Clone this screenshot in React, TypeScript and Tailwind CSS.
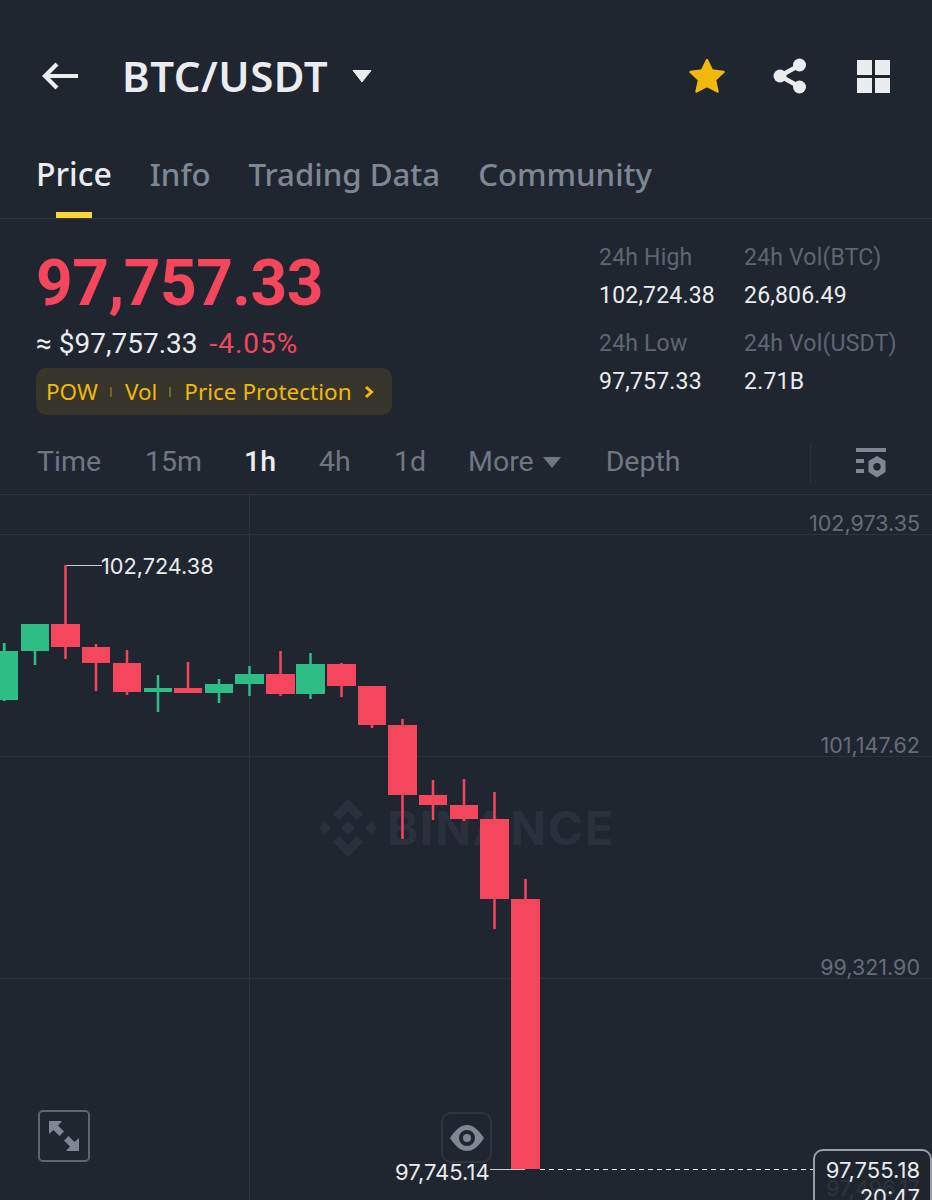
const UP = "#2ebd85";
const DOWN = "#f6465d";
const candles: [number, number, number, number, number, number, string][] = [
  [-10, 18, 651, 700, 643, 701, UP],
  [21, 49, 624, 651, 624, 665, UP],
  [51, 80, 624, 647, 565, 659, DOWN],
  [82, 110, 647, 663, 644, 691, DOWN],
  [113, 141, 663, 692, 650, 695, DOWN],
  [144, 172, 688, 692, 675, 712, UP],
  [174, 202, 688, 693, 662, 693, DOWN],
  [205, 233, 684, 693, 679, 703, UP],
  [235, 264, 674, 684, 666, 696, UP],
  [266, 295, 674, 694, 651, 696, DOWN],
  [296, 325, 664, 694, 653, 699, UP],
  [327, 356, 664, 686, 663, 697, DOWN],
  [358, 386, 686, 725, 686, 728, DOWN],
  [388, 417, 725, 795, 719, 839, DOWN],
  [419, 447, 795, 805, 780, 820, DOWN],
  [450, 478, 805, 819, 779, 821, DOWN],
  [480, 509, 819, 899, 792, 929, DOWN],
  [511, 540, 899, 1169, 879, 1169, DOWN],
];

function Stat({ label, value, className }: { label: string; value: string; className: string }) {
  return (
    <div className={className}>
      <div className="text-[23px] leading-[30px] tracking-[0.2px] text-[#5e6673]">{label}</div>
      <div className="mt-[8px] text-[23px] leading-[30px] tracking-[0.2px] text-[#eaecef]">{value}</div>
    </div>
  );
}

function BinanceMark({ className }: { className: string }) {
  return (
    <svg viewBox="0 0 58 58" className={className} fill="currentColor">
      <path d="M29 0 L44 15 L38 21 L29 12 L20 21 L14 15 Z" />
      <path d="M29 58 L44 43 L38 37 L29 46 L20 37 L14 43 Z" />
      <path d="M6 23 L12 29 L6 35 L0 29 Z" />
      <path d="M52 23 L58 29 L52 35 L46 29 Z" />
      <path d="M29 22 L36 29 L29 36 L22 29 Z" />
    </svg>
  );
}

export default function App() {
  return (
    <div className="flex h-[1200px] w-[932px] flex-col overflow-hidden bg-[#1f2630] font-['Noto_Sans',sans-serif]">
      {/* Header */}
      <div className="flex h-[152px] items-center">
        <svg viewBox="0 0 38 30" className="ml-[41px] h-[30px] w-[38px]" fill="none" stroke="#eaecef" strokeWidth="4.2">
          <path d="M37 15 H4" />
          <path d="M16 3 L4 15 L16 27" />
        </svg>
        <div className="ml-[43px] text-[42px] font-semibold leading-[48px] tracking-[0.5px] text-[#eaecef]">BTC/USDT</div>
        <svg viewBox="0 0 20 14" className="ml-[24px] h-[14px] w-[20px]" fill="#eaecef">
          <path d="M1 1.5 H19 L10 13 Z" stroke="#eaecef" strokeWidth="1" strokeLinejoin="round" />
        </svg>
        <svg viewBox="0 0 36 36" className="ml-[317px] h-[36px] w-[36px]" fill="#f0b90b">
          <path d="M18 2 L23 12.5 L34.5 14 L26 22 L28.5 33.5 L18 28 L7.5 33.5 L10 22 L1.5 14 L13 12.5 Z" stroke="#f0b90b" strokeWidth="2.4" strokeLinejoin="round" />
        </svg>
        <svg viewBox="0 0 34 36" className="ml-[48px] h-[36px] w-[34px]" fill="#eaecef" stroke="#eaecef">
          <path d="M27 7 L7 18 L27 29" fill="none" strokeWidth="4.5" />
          <circle cx="26.5" cy="7" r="6.5" stroke="none" />
          <circle cx="7" cy="18" r="6.5" stroke="none" />
          <circle cx="26.5" cy="29" r="6.5" stroke="none" />
        </svg>
        <div className="ml-[50px] grid h-[33px] w-[33px] grid-cols-2 gap-[3px]">
          <div className="bg-[#eaecef]" />
          <div className="bg-[#eaecef]" />
          <div className="bg-[#eaecef]" />
          <div className="bg-[#eaecef]" />
        </div>
      </div>

      {/* Tabs */}
      <div className="flex h-[67px] items-start border-b border-[#2f3641] pl-[36px] text-[31.2px] leading-[44px] text-[#7f8794]">
        <div className="relative h-[66px] text-[32px] font-medium text-[#eaecef]">
          Price
          <div className="absolute bottom-0 left-[20px] h-[6px] w-[36px] bg-[#fcd535]" />
        </div>
        <div className="ml-[38px] font-medium">Info</div>
        <div className="ml-[38px] font-medium">Trading Data</div>
        <div className="ml-[38px] font-medium">Community</div>
      </div>

      {/* Price and stats */}
      <div className="flex h-[215px] font-['Roboto',sans-serif]">
        <div className="ml-[36px] w-[563px]">
          <div className="mt-[25px] text-[64px] font-bold leading-[80px] tracking-[-0.5px] text-[#f6465d]">97,757.33</div>
          <div className="mt-[3px] flex items-center text-[28px] leading-[34px]">
            <span className="text-[#eaecef]">≈ $97,757.33</span>
            <span className="ml-[12px] tracking-[1px] text-[#f6465d]">-4.05%</span>
          </div>
          <div className="mt-[7px] flex h-[47px] w-[356px] items-center rounded-[10px] bg-[#38352a] pl-[10px] font-['Noto_Sans',sans-serif] text-[22.5px] text-[#f0b90b]">
            <span>POW</span>
            <span className="ml-[12px] h-[10px] w-[2px] bg-[#6e6433]" />
            <span className="ml-[13px]">Vol</span>
            <span className="ml-[12px] h-[10px] w-[2px] bg-[#6e6433]" />
            <span className="ml-[13px]">Price Protection</span>
            <svg viewBox="0 0 10 14" className="ml-[12px] h-[14px] w-[10px]" fill="none" stroke="#f0b90b" strokeWidth="3">
              <path d="M2 2 L7.5 7 L2 12" />
            </svg>
          </div>
        </div>
        <div className="mt-[24px] w-[145px]">
          <Stat label="24h High" value="102,724.38" className="" />
          <Stat label="24h Low" value="97,757.33" className="mt-[18px]" />
        </div>
        <div className="mt-[24px]">
          <Stat label="24h Vol(BTC)" value="26,806.49" className="" />
          <Stat label="24h Vol(USDT)" value="2.71B" className="mt-[18px]" />
        </div>
      </div>

      {/* Interval bar */}
      <div className="flex h-[61px] items-center border-b border-[#2f3641] pb-[3px] pl-[37px] font-['Roboto',sans-serif] text-[28.5px] text-[#6f7785]">
        <span className="w-[108px]">Time</span>
        <span className="w-[99px]">15m</span>
        <span className="w-[75px] font-medium text-[#eaecef]">1h</span>
        <span className="w-[75px]">4h</span>
        <span className="w-[74px]">1d</span>
        <span>More</span>
        <svg viewBox="0 0 20 13" className="ml-[8px] h-[13px] w-[20px]" fill="#6f7785">
          <path d="M1 1 H19 L10 12 Z" />
        </svg>
        <span className="ml-[44px]">Depth</span>
        <div className="ml-[129px] h-[40px] w-px bg-[#2a313c]" />
        <svg viewBox="0 0 30 30" className="ml-[45px] h-[30px] w-[30px]" fill="#7f8794">
          <rect x="0" y="0" width="30" height="4" />
          <rect x="0" y="11" width="8" height="4" />
          <rect x="0" y="21" width="8" height="4" />
          <path fillRule="evenodd" d="M21 8 L29.5 13 V24 L21 29.5 L12.5 24 V13 Z M21 15 A3.7 3.7 0 1 0 21 22.4 A3.7 3.7 0 1 0 21 15 Z" />
        </svg>
      </div>

      {/* Chart */}
      <div className="relative min-h-0 flex-1 overflow-hidden">
        <div className="absolute left-[319px] top-[304px] text-[#2b313c]">
          <BinanceMark className="h-[58px] w-[58px]" />
        </div>
        <div className="absolute left-[387px] top-[302px] font-['Inter',sans-serif] text-[47px] font-bold leading-[62px] tracking-[2px] text-[#2b313c]">
          BINANCE
        </div>

        <svg viewBox="0 495 932 705" className="absolute inset-0 h-full w-full">
          <path d="M0 534.5 H932 M0 756.5 H932 M0 978.5 H932 M249.5 495 V1200" stroke="#2d333e" strokeWidth="1" fill="none" />
          <path d="M65.5 565.5 H102" stroke="#c9ccd1" strokeWidth="1.2" fill="none" />
          <path d="M490 1169.5 H525" stroke="#c9ccd1" strokeWidth="1.2" fill="none" />
          <path d="M540 1169.5 H813" stroke="#eaecef" strokeWidth="1" strokeDasharray="5 4" fill="none" />
          {candles.map(([l, r, t, b, wt, wb, color], i) => (
            <g key={i} fill={color}>
              <rect x={(l + r) / 2 - 1.25} y={wt} width={2.5} height={wb - wt} />
              <rect x={l} y={t} width={r - l} height={b - t} />
            </g>
          ))}
          {/* first candle's wick sits left of its clipped body */}
          <rect x={3} y={643} width={2.5} height={58} fill={UP} />
        </svg>

        <div className="absolute right-[12px] top-[14px] font-['Inter',sans-serif] text-[21.5px] leading-[28px] text-[#656d7a]">102,973.35</div>
        <div className="absolute right-[12px] top-[236px] font-['Inter',sans-serif] text-[21.5px] leading-[28px] text-[#656d7a]">101,147.62</div>
        <div className="absolute right-[12px] top-[458px] font-['Inter',sans-serif] text-[21.5px] leading-[28px] text-[#656d7a]">99,321.90</div>
        <div className="absolute right-[12px] top-[679px] font-['Inter',sans-serif] text-[21.5px] leading-[28px] text-[#656d7a]">97,496.17</div>

        <div className="absolute left-[101px] top-[57px] font-['Inter',sans-serif] text-[21.7px] leading-[28px] text-[#eaecef]">102,724.38</div>
        <div className="absolute left-[395px] top-[663px] font-['Inter',sans-serif] text-[22px] leading-[28px] text-[#eaecef]">97,745.14</div>

        <div className="absolute left-[38px] top-[615px] flex h-[52px] w-[52px] items-center justify-center rounded-[5px] border-2 border-[#5e6673]">
          <svg viewBox="0 0 30 30" className="h-[30px] w-[30px]" fill="#7f8794">
            <path d="M0 0 H13 L9 4.5 L15 10.5 L10.5 15 L4.5 9 L0 13 Z" />
            <path d="M30 30 H17 L21 25.5 L15 19.5 L19.5 15 L25.5 21 L30 17 Z" />
          </svg>
        </div>
        <div className="absolute left-[441px] top-[617px] flex h-[51px] w-[51px] items-center justify-center rounded-[10px] border-2 border-[#2f3540]">
          <svg viewBox="0 0 34 26" className="h-[26px] w-[34px]" fill="#7f8794">
            <path fillRule="evenodd" d="M0 13 C6 4 11 0 17 0 C23 0 28 4 34 13 C28 22 23 26 17 26 C11 26 6 22 0 13 Z M17 5 A8 8 0 1 0 17 21 A8 8 0 1 0 17 5 Z" />
            <circle cx="17" cy="13" r="4" />
          </svg>
        </div>

        <div className="absolute left-[813px] top-[654px] h-[70px] w-[119px] rounded-[10px] border-2 border-[#9a9fa8] bg-[#1f2630]/80 pr-[10px] text-right font-['Inter',sans-serif] text-[22px] leading-[27px] text-[#eaecef]">
          <div className="mt-[6px]">97,755.18</div>
          <div>20:47</div>
        </div>
      </div>
    </div>
  );
}
